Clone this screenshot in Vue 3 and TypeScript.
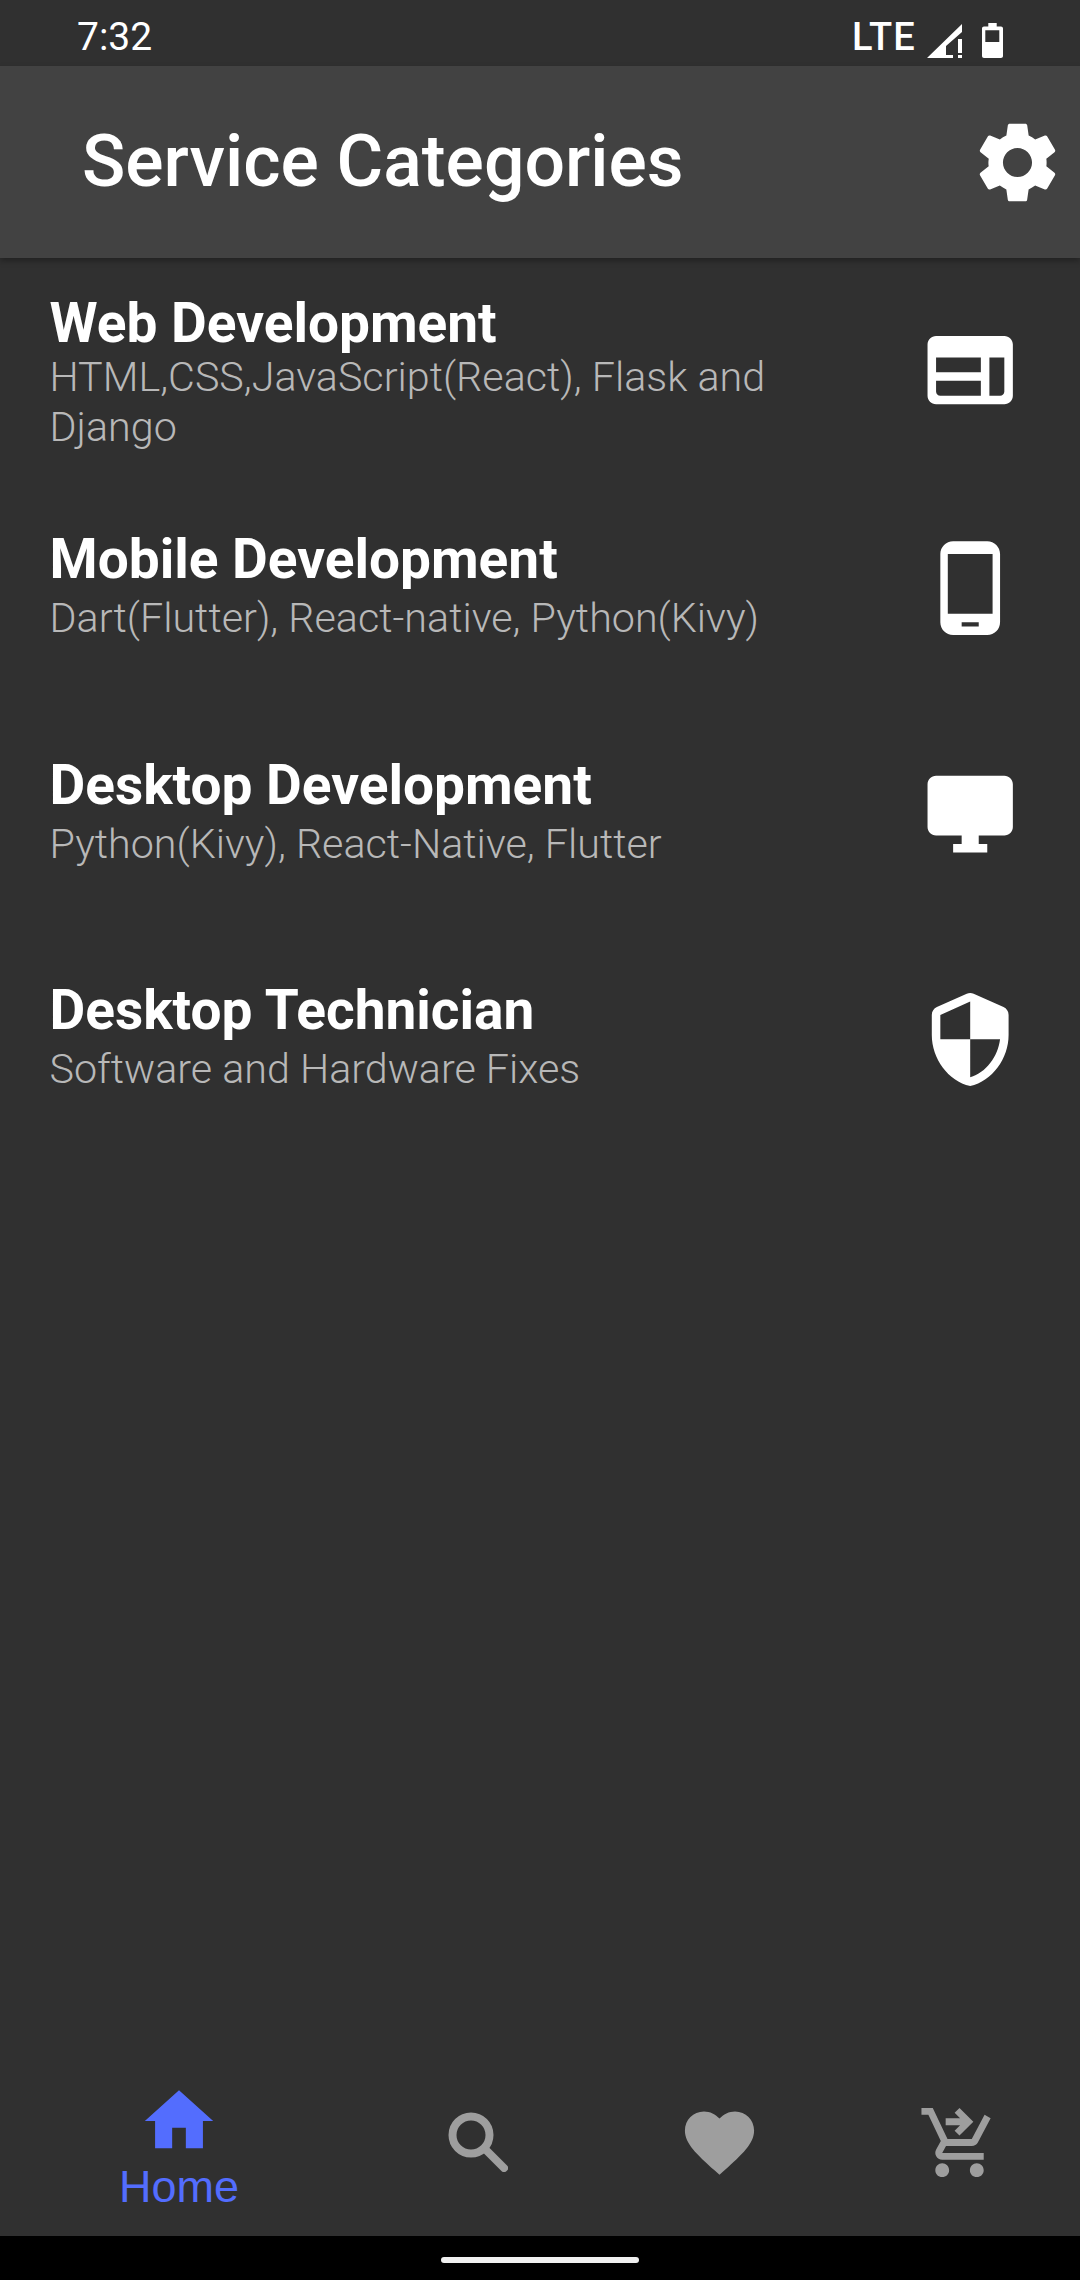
<script setup lang="ts">
interface Category {
  title: string
  info: string
  icon: string
}

const categories: Category[] = [
  {
    title: 'Web Development',
    info: 'HTML,CSS,JavaScript(React), Flask and Django',
    icon: 'M20 4H4c-1.1 0-2 .9-2 2v12c0 1.1.9 2 2 2h16c1.1 0 2-.9 2-2V6c0-1.1-.9-2-2-2zM4 9h10.5v3.5H4V9zm0 5.5h10.5V18H5c-.55 0-1-.45-1-1v-2.5zM16.5 9H20v8c0 .55-.45 1-1 1h-2.5V9z'
  },
  {
    title: 'Mobile Development',
    info: 'Dart(Flutter), React-native, Python(Kivy)',
    icon: 'M16 1H8C6.34 1 5 2.34 5 4v16c0 1.66 1.34 3 3 3h8c1.66 0 3-1.34 3-3V4c0-1.66-1.34-3-3-3zm-2 20h-4v-1h4v1zm3.25-3H6.75V4h10.5v14z'
  },
  {
    title: 'Desktop Development',
    info: 'Python(Kivy), React-Native, Flutter',
    icon: 'M20 3H4c-1.1 0-2 .9-2 2v10c0 1.1.9 2 2 2h6v2H8v2h8v-2h-2v-2h6c1.1 0 2-.9 2-2V5c0-1.1-.9-2-2-2z'
  },
  {
    title: 'Desktop Technician',
    info: 'Software and Hardware Fixes',
    icon: 'M11.19 1.36l-7 3.11C3.47 4.79 3 5.51 3 6.3V11c0 5.55 3.84 10.74 9 12 5.16-1.26 9-6.45 9-12V6.3c0-.79-.47-1.51-1.19-1.83l-7-3.11c-.51-.23-1.11-.23-1.62 0zM12 11.99h7c-.53 4.12-3.28 7.79-7 8.94V12H5V6.3l7-3.11v8.8z'
  }
]
</script>

<template>
  <div class="screen">
    <div class="status-bar">
      <span class="status-time">7:32</span>
      <div class="status-right">
        <span class="status-lte">LTE</span>
        <svg class="status-signal" viewBox="0 0 35 34" width="35" height="34">
          <path d="M0 34 35 0v8L19 22v9h7v3zM31 15h4v14h-4zM31 31h4v3h-4z" fill="#fff" />
        </svg>
        <svg class="status-battery" viewBox="0 0 21 35" width="21" height="35">
          <path fill-rule="evenodd" d="M6.3 0h8.4v3.5H19c1.1 0 2 .9 2 2V33c0 1.1-.9 2-2 2H2c-1.1 0-2-.9-2-2V5.500c0-1.100.9-2 2-2h4.300zM3.300 7.300V19h14V7.300z" fill="#fff" />
        </svg>
      </div>
    </div>

    <header class="app-bar">
      <h1 class="app-title">Service Categories</h1>
      <svg class="gear" viewBox="0 0 24 24" width="97" height="97">
        <path d="M19.14,12.94c0.04-0.3,0.06-0.61,0.06-0.94c0-0.32-0.02-0.64-0.07-0.94l2.03-1.58c0.18-0.14,0.23-0.41,0.12-0.61 l-1.92-3.32c-0.12-0.22-0.37-0.29-0.59-0.22l-2.39,0.96c-0.5-0.38-1.03-0.7-1.62-0.94L14.4,2.81c-0.04-0.24-0.24-0.41-0.48-0.41 h-3.84c-0.24,0-0.43,0.17-0.47,0.41L9.25,5.35C8.66,5.59,8.12,5.92,7.63,6.29L5.24,5.33c-0.22-0.08-0.47,0-0.59,0.22L2.74,8.87 C2.62,9.08,2.66,9.34,2.86,9.48l2.03,1.58C4.84,11.36,4.8,11.69,4.8,12s0.02,0.64,0.07,0.94l-2.03,1.58 c-0.18,0.14-0.23,0.41-0.12,0.61l1.92,3.32c0.12,0.22,0.37,0.29,0.59,0.22l2.39-0.96c0.5,0.38,1.03,0.7,1.62,0.94l0.36,2.54 c0.05,0.24,0.24,0.41,0.48,0.41h3.84c0.24,0,0.44-0.17,0.47-0.41l0.36-2.54c0.59-0.24,1.13-0.56,1.62-0.94l2.39,0.96 c0.22,0.08,0.47,0,0.59-0.22l1.92-3.32c0.12-0.22,0.07-0.47-0.12-0.61L19.14,12.94z M12,15.6c-1.98,0-3.6-1.62-3.6-3.6 s1.62-3.6,3.6-3.6s3.6,1.62,3.6,3.6S13.98,15.6,12,15.6z" fill="#fff" />
      </svg>
    </header>

    <main class="list">
      <div
        v-for="(item, index) in categories"
        :key="item.title"
        class="row"
        :class="{ 'row--tall': index === 0 }"
      >
        <div class="row-text">
          <div class="row-title">{{ item.title }}</div>
          <div class="row-info">{{ item.info }}</div>
        </div>
        <svg class="row-icon" viewBox="0 0 24 24" width="102.4" height="102.4">
          <path :d="item.icon" fill="#fff" />
        </svg>
      </div>
    </main>

    <nav class="bottom-nav">
      <div class="nav-item nav-item--home">
        <svg viewBox="0 0 24 24" width="82" height="82">
          <path d="M10 20v-6h4v6h5v-8h3L12 3 2 12h3v8z" fill="#536dfe" />
        </svg>
        <span class="nav-label">Home</span>
      </div>
      <div class="nav-item nav-item--search">
        <svg viewBox="0 0 60 60" width="60" height="60">
          <circle cx="23" cy="23" r="18.5" fill="none" stroke="#9e9e9e" stroke-width="8" />
          <path d="M38 38l18 18" fill="none" stroke="#9e9e9e" stroke-width="8" stroke-linecap="round" />
        </svg>
      </div>
      <div class="nav-item nav-item--heart">
        <svg viewBox="0 0 24 24" width="83" height="83">
          <path d="M12 21.35l-1.45-1.32C5.4 15.36 2 12.28 2 8.5 2 5.42 4.42 3 7.5 3c1.74 0 3.41.81 4.5 2.09C13.09 3.81 14.76 3 16.5 3 19.58 3 22 5.42 22 8.5c0 3.78-3.4 6.86-8.55 11.54L12 21.35z" fill="#9e9e9e" />
        </svg>
      </div>
      <div class="nav-item nav-item--cart">
        <svg viewBox="0 0 24 24" width="83" height="83">
          <path d="M7 18c-1.1 0-1.99.9-1.99 2S5.9 22 7 22s2-.9 2-2-.9-2-2-2zm10 0c-1.1 0-1.99.9-1.99 2s.89 2 1.99 2 2-.9 2-2-.9-2-2-2zm-1.45-5c.75 0 1.41-.41 1.75-1.03L21 4.96 19.25 4l-3.7 7H8.53L4.27 2H1v2h2l3.6 7.59-1.35 2.44C4.52 15.37 5.48 17 7 17h12v-2H7l1.1-2h7.45zM12 2l-1.41 1.41L12.17 5H8v2h4.17l-1.59 1.59L12 10l4-4z" fill="#9e9e9e" />
        </svg>
      </div>
    </nav>

    <div class="gesture-bar">
      <div class="gesture-pill"></div>
    </div>
  </div>
</template>

<style>
html,
body {
  margin: 0;
  background: #303030;
}
</style>

<style scoped>
.screen {
  width: 1080px;
  height: 2280px;
  display: flex;
  flex-direction: column;
  background: #303030;
  font-family: Roboto, "Liberation Sans", sans-serif;
  color: #fff;
  overflow: hidden;
}

.status-bar {
  height: 66px;
  flex: none;
  display: flex;
  align-items: center;
  justify-content: space-between;
  padding: 0 77px;
  box-sizing: border-box;
  background: #303030;
}

.status-time {
  font-size: 39px;
  line-height: 66px;
  padding-top: 7px;
}

.status-right {
  display: flex;
  align-items: flex-start;
}

.status-lte {
  font-size: 38px;
  font-weight: 500;
  letter-spacing: 1.2px;
  line-height: 44px;
  margin-right: 11px;
  margin-top: 8px;
}

.status-signal {
  margin-right: 20px;
  margin-top: 17px;
}

.status-battery {
  margin-top: 16px;
}

.app-bar {
  height: 192px;
  flex: none;
  display: flex;
  align-items: center;
  justify-content: space-between;
  padding: 0 14px 0 82px;
  background: #424242;
  box-shadow: 0 3px 6px rgba(0, 0, 0, 0.3);
  position: relative;
}

.app-title {
  margin: 0;
  font-size: 71.5px;
  font-weight: 500;
  line-height: 90px;
}

.list {
  flex: 1;
  padding-top: 37px;
}

.row {
  height: 225.5px;
  display: flex;
  align-items: flex-start;
  justify-content: space-between;
  padding: 0 59px 0 49.5px;
}

.row--tall {
  height: 236px;
}

.row-text {
  width: 740px;
}

.row-title {
  font-size: 55px;
  font-weight: 700;
  line-height: 57px;
  margin-bottom: 5px;
}

.row--tall .row-title {
  margin-bottom: 0;
}

.row-info {
  font-size: 41.25px;
  font-weight: 300;
  line-height: 50px;
  color: #b8b8b8;
}

.row-icon {
  margin-top: 6px;
}

.row--tall .row-icon {
  margin-top: 24px;
}

.bottom-nav {
  height: 148px;
  flex: none;
  display: flex;
  position: relative;
  background: #303030;
}

.nav-item {
  position: absolute;
  display: flex;
  flex-direction: column;
  align-items: center;
}

.nav-item--home {
  left: 79px;
  width: 200px;
  top: -8px;
}

.nav-item--search {
  left: 448px;
  top: 24px;
}

.nav-item--heart {
  left: 678px;
  top: 13px;
}

.nav-item--cart {
  left: 918px;
  top: 13px;
}

.nav-label {
  font-family: "Liberation Sans", Arial, sans-serif;
  font-size: 45px;
  line-height: 48px;
  color: #536dfe;
  margin-top: 1px;
}

.gesture-bar {
  height: 44px;
  flex: none;
  background: #000;
  display: flex;
  justify-content: center;
  padding-top: 21px;
  box-sizing: border-box;
}

.gesture-pill {
  width: 198px;
  height: 6px;
  border-radius: 3px;
  background: #f0f0f0;
}
</style>
